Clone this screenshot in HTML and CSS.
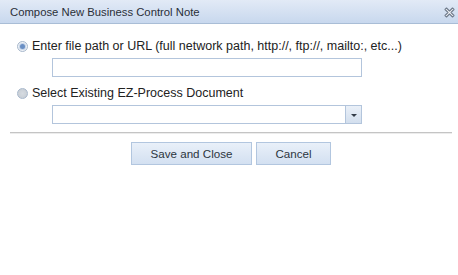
FILE: index.html
```html
<!DOCTYPE html>
<html lang="en">
<head>
    <meta charset="UTF-8">
    <title>Compose New Business Control Note</title>
    <link rel="stylesheet" href="styles.css">
</head>
<body>
    <div class="dialog">
        <div class="titlebar">
            <span class="title">Compose New Business Control Note</span>
            <span class="close" title="Close">
                <svg width="11" height="11" viewBox="0 0 11 11">
                    <path d="M1 2.5 L2.5 1 L5.5 4 L8.5 1 L10 2.5 L7 5.5 L10 8.5 L8.5 10 L5.5 7 L2.5 10 L1 8.5 L4 5.5 Z" fill="#f7f8fa" stroke="#6f7b8c" stroke-width="1.1" stroke-linejoin="round"/>
                </svg>
            </span>
        </div>

        <div class="content">
            <label class="option">
                <span class="radio checked"></span>
                <span>Enter file path or URL (full network path, http://, ftp://, mailto:, etc...)</span>
            </label>
            <div class="field">
                <input type="text" class="textbox">
            </div>

            <label class="option">
                <span class="radio"></span>
                <span>Select Existing EZ-Process Document</span>
            </label>
            <div class="field">
                <div class="combo">
                    <span class="combo-text"></span>
                    <span class="combo-arrow"></span>
                </div>
            </div>

            <div class="divider"></div>

            <div class="actions">
                <button class="btn save">Save and Close</button>
                <button class="btn cancel">Cancel</button>
            </div>
        </div>
    </div>
</body>
</html>
```

FILE: styles.css
```css
body {
    margin: 0;
    font-family: 'Liberation Sans', Arial, sans-serif;
    color: #222;
    background: #fff;
}

.titlebar {
    height: 23px;
    display: flex;
    align-items: center;
    justify-content: space-between;
    padding: 0 3px 0 10px;
    background: linear-gradient(to bottom, #e2eaf6 0%, #c8d8ee 100%);
    border-bottom: 1px solid #a9bdd6;
}

.title {
    font-size: 11.3px;
    color: #2a2f38;
}

.close {
    display: flex;
    margin-top: 1px;
}

.content {
    padding: 14px 6px 0 10px;
}

.option {
    display: flex;
    align-items: center;
    gap: 4px;
    height: 16px;
    padding-left: 7px;
    font-size: 12.5px;
}

.radio {
    width: 9px;
    height: 9px;
    border: 1px solid #a8b8cc;
    border-radius: 50%;
    background: radial-gradient(circle, #d6dbe1 0%, #c4cad2 100%);
    box-sizing: content-box;
    display: flex;
    align-items: center;
    justify-content: center;
}

.radio.checked {
    background: #eef2f7;
}

.radio.checked::after {
    content: '';
    width: 5px;
    height: 5px;
    border-radius: 50%;
    background: #6a8fc4;
    box-shadow: 0 0 0 1px #c5d4e8;
}

.field {
    padding-left: 42px;
    margin: 4px 0 8px;
}

.textbox {
    display: block;
    width: 310px;
    height: 19px;
    box-sizing: border-box;
    margin: 0;
    border: 1px solid #b3c5dc;
    font: inherit;
}

.combo {
    display: flex;
    width: 310px;
    height: 19px;
    box-sizing: border-box;
    border: 1px solid #b3c5dc;
}

.combo-text {
    flex: 1;
}

.combo-arrow {
    width: 15px;
    display: flex;
    align-items: center;
    justify-content: center;
    border-left: 1px solid #b3c5dc;
    background: linear-gradient(to bottom, #eaf0f8, #d3dfee);
}

.combo-arrow::after {
    content: '';
    border-left: 3px solid transparent;
    border-right: 3px solid transparent;
    border-top: 3px solid #333c48;
    margin-top: 1px;
}

.divider {
    border-top: 1px solid #c4c4c4;
    border-bottom: 1px solid #ececec;
    margin-top: 7px;
}

.actions {
    display: flex;
    justify-content: center;
    gap: 4px;
    margin-top: 8px;
}

.btn {
    height: 23px;
    padding: 0;
    font-family: inherit;
    font-size: 11.6px;
    color: #2c3540;
    border: 1px solid #b2c6df;
    background: linear-gradient(to bottom, #e9f0f9 0%, #d3e0f1 100%);
    cursor: pointer;
}

.save {
    width: 121px;
}

.cancel {
    width: 75px;
}
```
